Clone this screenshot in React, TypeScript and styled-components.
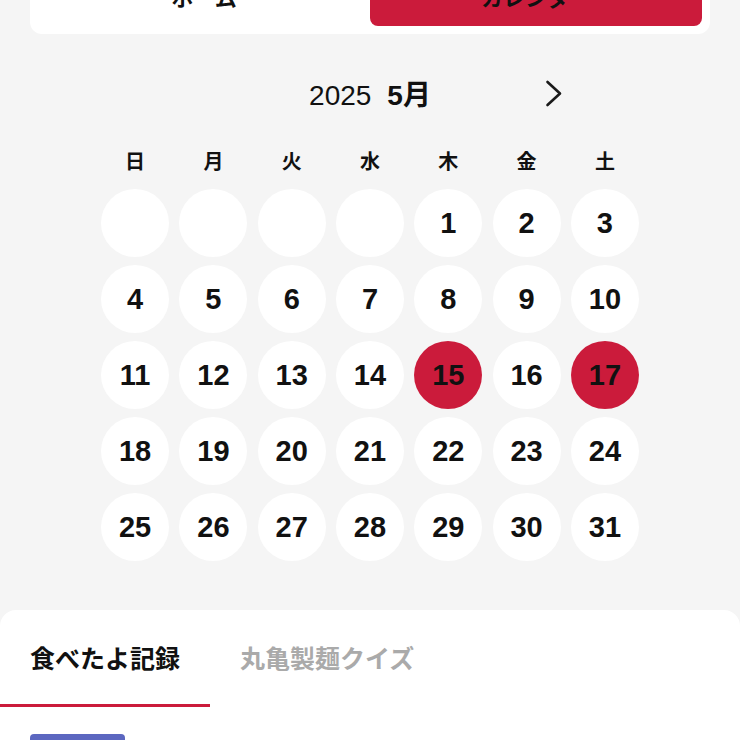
import React from 'react';
import styled, { createGlobalStyle } from 'styled-components';

const GlobalStyle = createGlobalStyle`
  * { box-sizing: border-box; }
  body {
    margin: 0;
    background: #f5f5f5;
    font-family: "Liberation Sans", "Noto Sans CJK JP", sans-serif;
    color: #111;
  }
`;

const RED = '#cb1b3b';

const Page = styled.div`
  width: 740px;
  height: 740px;
  overflow: hidden;
  display: flex;
  flex-direction: column;

  & > * {
    flex-shrink: 0;
  }
`;

const TopNav = styled.nav`
  margin: -42px 30px 0;
  padding: 8px;
  background: #fff;
  border-radius: 12px;
  display: grid;
  grid-template-columns: 1fr 1fr;
`;

const NavTab = styled.button<{ active?: boolean }>`
  height: 60px;
  border: none;
  border-radius: 8px;
  background: ${(p) => (p.active ? RED : 'transparent')};
  color: #111;
  font-family: inherit;
  font-size: 22px;
  font-weight: 700;
`;

const MonthHeader = styled.div`
  width: 400px;
  height: 48px;
  margin: 35px auto 0;
  display: grid;
  grid-template-columns: 32px 1fr 32px;
  align-items: center;
`;

const MonthLabel = styled.div`
  display: flex;
  justify-content: center;
  align-items: baseline;
  gap: 16px;
  font-size: 28px;
`;

const Year = styled.span`
  font-weight: 400;
`;

const Month = styled.span`
  font-weight: 700;
`;

const NextButton = styled.button`
  width: 32px;
  height: 32px;
  padding: 0;
  border: none;
  background: none;
  display: flex;
  align-items: center;
  justify-content: center;
`;

const Week = styled.div`
  margin: 33px auto 0;
  display: grid;
  grid-template-columns: repeat(7, 68px);
  column-gap: 10.3px;
`;

const WeekDay = styled.div`
  height: 24px;
  line-height: 24px;
  text-align: center;
  font-size: 20px;
  font-weight: 700;
`;

const Days = styled.div`
  margin: 15px auto 0;
  display: grid;
  grid-template-columns: repeat(7, 68px);
  grid-auto-rows: 68px;
  column-gap: 10.3px;
  row-gap: 8px;
`;

const Day = styled.div<{ marked?: boolean }>`
  border-radius: 50%;
  background: ${(p) => (p.marked ? RED : '#fff')};
  display: flex;
  align-items: center;
  justify-content: center;
  font-size: 29px;
  font-weight: 700;
  color: #111;
`;

const Sheet = styled.section`
  margin-top: 49px;
  flex: 1 0 auto;
  background: #fff;
  border-radius: 16px 16px 0 0;
`;

const SheetTabs = styled.div`
  display: flex;
`;

const SheetTab = styled.div<{ active?: boolean }>`
  height: 97px;
  padding: 0 30px;
  display: flex;
  align-items: center;
  font-size: 25px;
  font-weight: 700;
  color: ${(p) => (p.active ? '#111' : '#aaa')};
  border-bottom: 3px solid ${(p) => (p.active ? RED : 'transparent')};
`;

const SheetBody = styled.div`
  padding: 27px 30px 0;
`;

const Chip = styled.div`
  width: 95px;
  height: 36px;
  border-radius: 4px;
  background: #5c67c0;
`;

const weekDays = ['日', '月', '火', '水', '木', '金', '土'];
const marked = [15, 17];
const offset = 4;
const cells: (number | null)[] = [
  ...Array.from({ length: offset }, () => null),
  ...Array.from({ length: 31 }, (_, i) => i + 1),
];

export default function App() {
  return (
    <Page>
      <GlobalStyle />
      <TopNav>
        <NavTab>ホーム</NavTab>
        <NavTab active>カレンダー</NavTab>
      </TopNav>

      <MonthHeader>
        <span />
        <MonthLabel>
          <Year>2025</Year>
          <Month>5月</Month>
        </MonthLabel>
        <NextButton aria-label="次の月">
          <svg width="18" height="27" viewBox="0 0 18 27" fill="none">
            <path d="M2.5 2 L15 13.5 L2.5 25" stroke="#1a1a1a" strokeWidth="2.6" strokeLinecap="round" strokeLinejoin="round" />
          </svg>
        </NextButton>
      </MonthHeader>

      <Week>
        {weekDays.map((d) => (
          <WeekDay key={d}>{d}</WeekDay>
        ))}
      </Week>

      <Days>
        {cells.map((d, i) => (
          <Day key={i} marked={d !== null && marked.includes(d)}>
            {d}
          </Day>
        ))}
      </Days>

      <Sheet>
        <SheetTabs>
          <SheetTab active>食べたよ記録</SheetTab>
          <SheetTab>丸亀製麺クイズ</SheetTab>
        </SheetTabs>
        <SheetBody>
          <Chip />
        </SheetBody>
      </Sheet>
    </Page>
  );
}
